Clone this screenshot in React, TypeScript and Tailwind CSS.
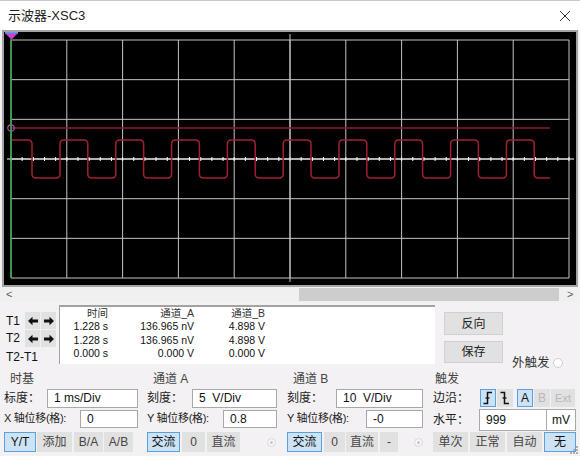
import React from 'react'

const FONT = "font-['Liberation_Sans','Noto_Sans_CJK_SC',sans-serif]"

function Scope() {
  const xs = Array.from({ length: 11 }, (_, k) => 11 + 55.8 * k)
  const ys = Array.from({ length: 7 }, (_, j) => 40 + 39.67 * j)
  const ticksX = Array.from({ length: 51 }, (_, i) => 11 + 11.16 * i)

  const hi = 140
  const lo = 178
  const r = 4
  let d = `M12 ${hi}`
  for (let k = 0; k < 10; k++) {
    const f = 32 + 55.8 * k
    d += ` H${f - r} Q${f} ${hi} ${f} ${hi + r} V${lo - r} Q${f} ${lo} ${f + r} ${lo}`
    if (k < 9) {
      const ri = 60 + 55.8 * k
      d += ` H${ri - r} Q${ri} ${lo} ${ri} ${lo - r} V${hi + r} Q${ri} ${hi} ${ri + r} ${hi}`
    }
  }
  d += ' H550'

  return (
    <div className="mx-[2px] h-[257px] border-2 border-[#a3a3a3] bg-black">
      <svg width="572" height="253" viewBox="4 32 572 253" className="block">
        {xs.map((x) => (
          <line key={'v' + x} x1={x} x2={x} y1={40} y2={278} stroke="#c4c4c4" strokeWidth="1" />
        ))}
        {ys.map((y) => (
          <line key={'h' + y} x1={11} x2={569} y1={y} y2={y} stroke="#c4c4c4" strokeWidth="1" />
        ))}
        <line x1={7} x2={574} y1={159} y2={159} stroke="#ffffff" strokeWidth="1.2" />
        {ticksX.map((x) => (
          <line key={'tx' + x} x1={x} x2={x} y1={157} y2={161} stroke="#ffffff" strokeWidth="1" />
        ))}
        <line x1={290} x2={290} y1={34} y2={282} stroke="#c8c8c8" strokeWidth="1" />
        <line x1={11} x2={550} y1={128} y2={128} stroke="#8c1b2a" strokeWidth="1.6" />
        <path d={d} fill="none" stroke="#a3202f" strokeWidth="1.5" />
        <line x1={11} x2={11} y1={33} y2={278} stroke="#2fa84a" strokeWidth="1.5" />
        <circle cx={11} cy={128} r={3.2} fill="none" stroke="#9a5a9e" strokeWidth="1.2" />
        <path d="M5 33 H18 L11.5 39.5 Z" fill="#d23cc8" stroke="#7a2a80" strokeWidth="0.8" />
        <line x1={5} x2={18} y1={32.8} y2={32.8} stroke="#5ab0ff" strokeWidth="1.4" />
      </svg>
    </div>
  )
}

function Scrollbar() {
  return (
    <div className="flex h-[15px] items-center bg-[#f0f0f0] text-[#606060]">
      <span className="w-[299px] pl-[6px] text-[11px] leading-none">&lt;</span>
      <div className="h-[13px] w-[260px] bg-[#cdcdcd]" />
      <span className="pl-[8px] text-[11px] leading-none">&gt;</span>
    </div>
  )
}

function Arrow({ dir }: { dir: 'l' | 'r' }) {
  return (
    <svg width="12" height="10" viewBox="0 0 12 10">
      {dir === 'l' ? (
        <path d="M1 5 L5.5 0.8 V3.6 H11 V6.4 H5.5 V9.2 Z" fill="#111" />
      ) : (
        <path d="M11 5 L6.5 0.8 V3.6 H1 V6.4 H6.5 V9.2 Z" fill="#111" />
      )}
    </svg>
  )
}

function ArrowBtn({ dir }: { dir: 'l' | 'r' }) {
  return (
    <div className="flex h-[17px] w-[15px] items-center justify-center bg-[#e2e1e2]">
      <Arrow dir={dir} />
    </div>
  )
}

function Cursors() {
  const rows = [
    ['1.228 s', '136.965 nV', '4.898 V'],
    ['1.228 s', '136.965 nV', '4.898 V'],
    ['0.000 s', '0.000 V', '0.000 V'],
  ]
  return (
    <div className="flex h-[68px]">
      <div className="w-[59px] pt-[10px] text-[12px] text-[#111]">
        <div className="flex">
          <div className="w-[25px] pl-[6px]">
            <div className="flex h-[17px] items-center">T1</div>
            <div className="flex h-[17px] items-center">T2</div>
          </div>
          <div className="grid grid-cols-[15px_15px] gap-[1px]">
            <ArrowBtn dir="l" />
            <ArrowBtn dir="r" />
            <ArrowBtn dir="l" />
            <ArrowBtn dir="r" />
          </div>
        </div>
        <div className="flex h-[20px] items-center pl-[6px]">T2-T1</div>
      </div>
      <div className="mt-[3px] h-[59px] w-[376px] border-l border-t-2 border-[#a2a2a2] bg-white text-[10.5px] leading-[13.3px] text-[#111]">
        <div className="grid grid-cols-[48px_86px_71px] text-right">
          <span className="text-[#333]">时间</span>
          <span className="text-[#333]">通道_A</span>
          <span className="text-[#333]">通道_B</span>
          {rows.map((row, i) =>
            row.map((v, j) => <span key={i + '-' + j}>{v}</span>)
          )}
        </div>
      </div>
      <div className="ml-[9px] flex flex-col pt-[10px]">
        <div className="flex h-[23px] w-[59px] items-center justify-center border border-[#d0d0d0] bg-[#e1e1e1] text-[12px] text-[#222]">
          反向
        </div>
        <div className="mt-[6px] flex h-[22px] w-[59px] items-center justify-center border border-[#d0d0d0] bg-[#e1e1e1] text-[12px] text-[#222]">
          保存
        </div>
      </div>
      <div className="ml-[9px] mt-[52px] flex h-[18px] items-center">
        <span className="text-[12.5px] text-[#333]">外触发</span>
        <span className="ml-[3px] inline-block h-[10px] w-[10px] rounded-full border border-[#cfcfcf] bg-white" />
      </div>
    </div>
  )
}

function Field({ w, children }: { w: string; children: React.ReactNode }) {
  return (
    <div className={`flex items-center border border-[#a8a8a8] bg-white pl-[6px] text-[12px] text-[#111] ${w}`}>
      {children}
    </div>
  )
}

function Btn({
  w,
  on,
  dim,
  children,
}: {
  w: string
  on?: boolean
  dim?: boolean
  children: React.ReactNode
}) {
  return (
    <div
      className={`flex h-[20px] items-center justify-center text-[12px] ${w} ${
        on ? 'border border-[#5b9fdb] bg-[#cce3f6] text-[#111]' : 'bg-[#e1e1e1]'
      } ${dim ? 'text-[#b5b5b5]' : on ? '' : 'text-[#444]'}`}
    >
      {children}
    </div>
  )
}

function Radio() {
  return (
    <span className="flex h-[9px] w-[9px] items-center justify-center rounded-full border border-[#d8d8d8] bg-[#f7f7f7]">
      <span className="h-[3px] w-[3px] rounded-full bg-[#c8c8c8]" />
    </span>
  )
}

function EdgeIcon({ rise }: { rise: boolean }) {
  return (
    <svg width="12" height="14" viewBox="0 0 12 14">
      <path
        d={rise ? 'M1.5 12.5 H5.5 V1.5 H10' : 'M1.5 1.5 H5.5 V12.5 H10'}
        fill="none"
        stroke="#111"
        strokeWidth="1.5"
      />
      <path d="M3.5 7 H7.5" stroke="#111" strokeWidth="1.3" />
    </svg>
  )
}

function Controls() {
  return (
    <div className="flex h-[86px] text-[#222]">
      <div className="w-[143px] pl-[4px]">
        <div className="flex h-[18px] items-center pl-[6px] text-[12px] text-[#444]">时基</div>
        <div className="flex h-[20px] items-center">
          <span className="w-[43px] text-[12px]">标度：</span>
          <Field w="h-[19px] w-[91px]">1 ms/Div</Field>
        </div>
        <div className="mt-[1px] flex h-[19px] items-center">
          <span className="w-[76px] text-[11px] tracking-[-0.3px]">X 轴位移(格):</span>
          <Field w="h-[18px] w-[58px]">0</Field>
        </div>
        <div className="mt-[4px] flex">
          <Btn w="w-[32px]" on>Y/T</Btn>
          <Btn w="ml-[1px] w-[35px]">添加</Btn>
          <Btn w="ml-[2px] w-[29px]">B/A</Btn>
          <Btn w="ml-[1px] w-[29px]">A/B</Btn>
        </div>
      </div>

      <div className="w-[141px] pl-[4px]">
        <div className="flex h-[18px] items-center pl-[6px] text-[12px] text-[#444]">通道 A</div>
        <div className="flex h-[20px] items-center">
          <span className="w-[45px] text-[12px]">刻度：</span>
          <Field w="h-[19px] w-[85px]">5&nbsp;&nbsp;V/Div</Field>
        </div>
        <div className="mt-[1px] flex h-[19px] items-center">
          <span className="w-[76px] text-[11px] tracking-[-0.3px]">Y 轴位移(格):</span>
          <Field w="h-[18px] w-[54px]">0.8</Field>
        </div>
        <div className="mt-[4px] flex items-center">
          <Btn w="w-[33px]" on>交流</Btn>
          <Btn w="ml-[2px] w-[23px]">0</Btn>
          <Btn w="ml-[2px] w-[33px]">直流</Btn>
          <span className="ml-[27px]">
            <Radio />
          </span>
        </div>
      </div>

      <div className="w-[146px] pl-[3px]">
        <div className="flex h-[18px] items-center pl-[6px] text-[12px] text-[#444]">通道 B</div>
        <div className="flex h-[20px] items-center">
          <span className="w-[49px] text-[12px]">刻度：</span>
          <Field w="h-[19px] w-[87px]">10&nbsp;&nbsp;V/Div</Field>
        </div>
        <div className="mt-[1px] flex h-[19px] items-center">
          <span className="w-[79px] text-[11px] tracking-[-0.3px]">Y 轴位移(格):</span>
          <Field w="h-[18px] w-[57px]">-0</Field>
        </div>
        <div className="mt-[4px] flex items-center">
          <Btn w="w-[35px]" on>交流</Btn>
          <Btn w="ml-[2px] w-[21px]">0</Btn>
          <Btn w="ml-[1px] w-[32px]">直流</Btn>
          <Btn w="ml-[2px] w-[18px]">-</Btn>
          <span className="ml-[16px]">
            <Radio />
          </span>
        </div>
      </div>

      <div className="flex-1 pl-[3px]">
        <div className="flex h-[18px] items-center pl-[2px] text-[12px] text-[#444]">触发</div>
        <div className="flex h-[20px] items-center">
          <span className="w-[47px] text-[12px]">边沿：</span>
          <div className="flex h-[18px] w-[16px] items-center justify-center border border-[#5b9fdb] bg-[#cce3f6]">
            <EdgeIcon rise />
          </div>
          <div className="ml-[1px] flex h-[18px] w-[16px] items-center justify-center bg-[#e1e1e1]">
            <EdgeIcon rise={false} />
          </div>
          <div className="ml-[4px] flex h-[18px] w-[16px] items-center justify-center border border-[#5b9fdb] bg-[#cce3f6] text-[12px] text-[#111]">
            A
          </div>
          <div className="ml-[1px] flex h-[18px] w-[16px] items-center justify-center bg-[#e1e1e1] text-[12px] text-[#b8b8b8]">
            B
          </div>
          <div className="ml-[1px] flex h-[18px] w-[24px] items-center justify-center bg-[#e1e1e1] text-[11px] text-[#b8b8b8]">
            Ext
          </div>
        </div>
        <div className="mt-[1px] flex h-[22px] items-center">
          <span className="w-[46px] text-[12px]">水平：</span>
          <Field w="h-[22px] w-[68px]">999</Field>
          <div className="flex h-[22px] w-[29px] items-center justify-center border border-l-0 border-[#a8a8a8] bg-white text-[12px] text-[#111]">
            mV
          </div>
        </div>
        <div className="mt-[1px] flex">
          <Btn w="w-[35px]">单次</Btn>
          <Btn w="ml-[2px] w-[35px]">正常</Btn>
          <Btn w="ml-[2px] w-[35px]">自动</Btn>
          <Btn w="ml-[2px] w-[32px]" on>无</Btn>
        </div>
      </div>
    </div>
  )
}

export default function App() {
  return (
    <div className={`relative h-[456px] w-[580px] overflow-hidden bg-[#f3f1f3] ${FONT}`}>
      <div className="flex h-[30px] items-center justify-between border-t border-[#c8c8c8] bg-white pl-[8px] pr-[9px]">
        <span className="text-[13px] text-[#222]">示波器-XSC3</span>
        <svg width="12" height="12" viewBox="0 0 12 12">
          <path d="M1 1 L11 11 M11 1 L1 11" stroke="#333" strokeWidth="1" />
        </svg>
      </div>
      <Scope />
      <Scrollbar />
      <Cursors />
      <Controls />
      <div className="absolute bottom-[2px] right-[2px] grid grid-cols-3 gap-[1px]">
        {[0, 0, 1, 0, 1, 1, 1, 1, 1].map((v, i) => (
          <span key={i} className={`h-[2px] w-[2px] ${v ? 'bg-[#b0b0b0]' : ''}`} />
        ))}
      </div>
    </div>
  )
}
